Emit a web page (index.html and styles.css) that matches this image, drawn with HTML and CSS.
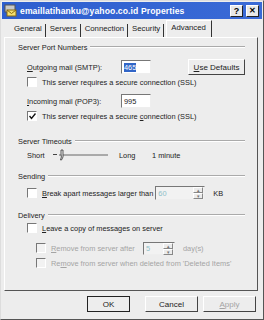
FILE: index.html
```html
<!DOCTYPE html>
<html lang="en">
<head>
    <meta charset="UTF-8">
    <title>emaillatihanku@yahoo.co.id Properties</title>
    <link rel="stylesheet" href="styles.css">
</head>
<body>
    <div class="window">
        <div class="titlebar">
            <svg class="app-icon" width="13" height="13" viewBox="0 0 13 13">
                <rect x="1" y="1" width="10" height="7" fill="#c8c8c8" stroke="#555"/>
                <rect x="3" y="6" width="9" height="6" fill="#f4e070" stroke="#8a6a10"/>
                <path d="M3 6 L7.5 9.5 L12 6" fill="none" stroke="#8a6a10"/>
            </svg>
            <span class="title">emaillatihanku@yahoo.co.id Properties</span>
            <span class="tbtn">?</span>
            <span class="tbtn close">&#x2715;</span>
        </div>

        <div class="tabs">
            <span class="tab">General</span>
            <span class="tab">Servers</span>
            <span class="tab">Connection</span>
            <span class="tab">Security</span>
            <span class="tab active">Advanced</span>
        </div>

        <div class="panel">
            <div class="group g1"><span>Server Port Numbers</span></div>

            <div class="row r-out">
                <span class="label"><u>O</u>utgoing mail (SMTP):</span>
                <span class="input"><span class="sel">465</span></span>
                <span class="button defaults"><u>U</u>se Defaults</span>
            </div>
            <div class="row r-ssl1">
                <span class="check"></span>
                <span>This server requires a secure connection (SSL)</span>
            </div>
            <div class="row r-in">
                <span class="label"><u>I</u>ncoming mail (POP3):</span>
                <span class="input">995</span>
            </div>
            <div class="row r-ssl2">
                <span class="check">
                    <svg width="7" height="7" viewBox="0 0 7 7"><path d="M0.5 3 L2.5 5.5 L6.5 0.5" fill="none" stroke="#111" stroke-width="1.4"/></svg>
                </span>
                <span>This server requires a secure <u>c</u>onnection (SSL)</span>
            </div>

            <div class="group g2"><span>Server Timeouts</span></div>
            <div class="row r-time">
                <span class="short">Short</span>
                <svg class="slider" width="56" height="12" viewBox="0 0 56 12">
                    <line x1="0" y1="5.5" x2="4" y2="5.5" stroke="#444"/>
                    <line x1="6" y1="6" x2="55" y2="6" stroke="#666"/>
                    <path d="M8 1 L10 1 L10 8 L8.5 11 L7.5 11 Q9 8 8 5 Z" fill="#f0f0f0" stroke="#333" stroke-width="0.8"/>
                </svg>
                <span class="long">Long</span>
                <span>1 minute</span>
            </div>

            <div class="group g3"><span>Sending</span></div>
            <div class="row r-break">
                <span class="check"></span>
                <span class="break-label"><u>B</u>reak apart messages larger than</span>
                <span class="input spin wide disabled">60<span class="arrows"><i>&#9652;</i><i>&#9662;</i></span></span>
                <span class="unit">KB</span>
            </div>

            <div class="group g4"><span>Delivery</span></div>
            <div class="row r-leave">
                <span class="check"></span>
                <span><u>L</u>eave a copy of messages on server</span>
            </div>
            <div class="row r-rem1 sub grey">
                <span class="check off"></span>
                <span class="rem-label"><u>R</u>emove from server after</span>
                <span class="input spin narrow disabled">5<span class="arrows"><i>&#9652;</i><i>&#9662;</i></span></span>
                <span class="unit">day(s)</span>
            </div>
            <div class="row r-rem2 sub grey">
                <span class="check off"></span>
                <span>Re<u>m</u>ove from server when deleted from 'Deleted Items'</span>
            </div>
        </div>

        <div class="footer">
            <span class="button ok">OK</span>
            <span class="button">Cancel</span>
            <span class="button grey"><u>A</u>pply</span>
        </div>
    </div>
</body>
</html>
```

FILE: styles.css
```css
* {
    box-sizing: border-box;
}
body {
    margin: 0;
    padding: 0;
    font-family: "Liberation Sans", Arial, sans-serif;
    font-size: 7.4px;
    color: #222;
    background: #ededed;
    white-space: nowrap;
}
.window {
    width: 264px;
    height: 320px;
    border: 1px solid #555;
    border-top-color: #ddd;
    border-left-color: #ddd;
    background: #ededed;
    display: flex;
    flex-direction: column;
}
.titlebar {
    height: 17px;
    margin: 1px 1px 0 1px;
    background: linear-gradient(to right, #2d5ecf, #3a6ad6);
    display: flex;
    align-items: center;
    padding: 0 3px 0 2px;
}
.app-icon {
    margin-right: 3px;
}
.title {
    flex: 1;
    color: #fff;
    font-weight: bold;
    font-size: 8.6px;
    letter-spacing: 0.1px;
}
.tbtn {
    width: 13px;
    height: 12px;
    margin-left: 2px;
    background: #e8e8e8;
    border: 1px solid #222;
    border-top-color: #fff;
    border-left-color: #fff;
    font-weight: bold;
    font-size: 9px;
    line-height: 10px;
    text-align: center;
    color: #000;
}
.close {
    margin-left: 3px;
    font-size: 8px;
}
.tabs {
    display: flex;
    align-items: flex-end;
    height: 18px;
    padding-left: 10px;
}
.tab {
    padding: 0 3px 3px 3px;
    border-right: 1px solid #333;
    margin-right: 1px;
    line-height: 10px;
    font-size: 7.8px;
}
.tab.active {
    padding: 2px 5px 4px 4px;
    border-left: 1px solid #fff;
    border-top: 1px solid #fff;
    border-right: 1px solid #333;
    margin-left: 1px;
}
.panel {
    margin: 0 5px 0 3px;
    height: 254px;
    border: 1px solid #555;
    border-top-color: #fff;
    border-left-color: #fff;
    padding: 4px 12px 0 13px;
    display: flex;
    flex-direction: column;
}
.group {
    display: flex;
    align-items: center;
    height: 10px;
}
.group::after {
    content: "";
    flex: 1;
    margin-left: 3px;
    border-top: 1px solid #aaa;
    border-bottom: 1px solid #fff;
}
.row {
    display: flex;
    align-items: center;
    padding-left: 9px;
}
.label {
    width: 94px;
}
.input {
    width: 30px;
    height: 14px;
    padding-left: 2px;
    background: #fff;
    border: 1px solid #eee;
    border-top-color: #777;
    border-left-color: #777;
    display: flex;
    align-items: center;
    position: relative;
}
.sel {
    background: #3165c7;
    color: #fff;
}
.button {
    height: 16px;
    display: flex;
    align-items: center;
    justify-content: center;
    background: #ededed;
    border: 1px solid #444;
    border-top-color: #fff;
    border-left-color: #fff;
    font-size: 8px;
}
.defaults {
    width: 57px;
    margin-left: auto;
}
.check {
    width: 10px;
    height: 10px;
    margin-right: 5px;
    background: #fff;
    border: 1px solid #fff;
    border-top-color: #777;
    border-left-color: #777;
    display: flex;
    align-items: center;
    justify-content: center;
    flex-shrink: 0;
}
.check.off {
    background: #f2f2f2;
}
.r-out { margin-top: 7px; height: 16px; }
.r-ssl1 { margin-top: 2px; height: 10px; }
.r-in { margin-top: 7px; height: 14px; }
.r-ssl2 { margin-top: 3px; height: 10px; }
.g2 { margin-top: 15px; }
.r-time { margin-top: 3px; height: 12px; }
.g3 { margin-top: 10px; }
.r-break { margin-top: 5px; height: 14px; }
.g4 { margin-top: 10px; }
.r-leave { margin-top: 3px; height: 10px; }
.r-rem1 { margin-top: 9px; height: 12px; }
.r-rem2 { margin-top: 4px; height: 10px; }
.short {
    width: 26px;
}
.slider {
    margin-right: 10px;
}
.long {
    width: 33px;
}
.break-label {
    margin-right: 2px;
}
.spin.wide {
    width: 50px;
}
.spin.narrow {
    width: 32px;
    height: 13px;
}
.disabled {
    color: #8fc0c8;
    background: #f2f2f2;
}
.arrows {
    position: absolute;
    right: 1px;
    top: 0;
    width: 10px;
    height: 12px;
    display: flex;
    flex-direction: column;
}
.arrows i {
    flex: 1;
    font-style: normal;
    font-size: 5px;
    line-height: 4px;
    text-align: center;
    color: #777;
    background: #ececec;
    border: 1px solid #888;
    border-top-color: #fff;
    border-left-color: #fff;
}
.unit {
    margin-left: 8px;
}
.sub {
    padding-left: 18px;
}
.rem-label {
    width: 92px;
}
.grey {
    color: #a4a4a4;
}
.footer {
    display: flex;
    justify-content: flex-end;
    gap: 5px;
    padding: 5px 7px 0 0;
}
.footer .button {
    width: 53px;
    height: 16px;
}
.footer .ok {
    width: 43px;
    border: 1px solid #222;
    margin-right: 10px;
}
```
